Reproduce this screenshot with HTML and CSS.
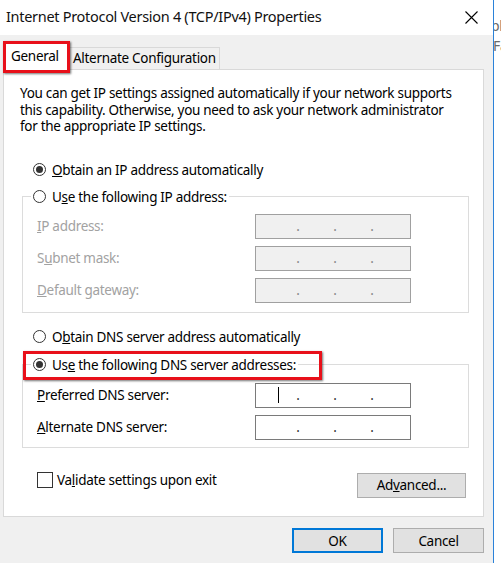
FILE: index.html
```html
<!DOCTYPE html>
<html>
<head>
<meta charset="utf-8">
<link rel="stylesheet" href="styles.css">
</head>
<body>
<div class="screen">
  <div class="window">
    <div class="titlebar">
      <span class="title">Internet Protocol Version 4 (TCP/IPv4) Properties</span>
      <svg class="close" width="13" height="13" viewBox="0 0 13 13"><path d="M0.5 0.5 L12.5 12.5 M12.5 0.5 L0.5 12.5" stroke="#000" stroke-width="1.1" fill="none"/></svg>
    </div>
    <div class="content">
      <div class="tabs">
        <div class="tab active">General<span class="mark mark-tab"></span></div>
        <div class="tab">Alternate Configuration</div>
      </div>
      <div class="panel">
        <p class="desc">You can get IP settings assigned automatically if your network supports<br>this capability. Otherwise, you need to ask your network administrator<br>for the appropriate IP settings.</p>

        <div class="radio-row r-ip-auto"><span class="radio checked"></span><span><u>O</u>btain an IP address automatically</span></div>
        <fieldset class="group g-ip">
          <legend class="radio-row"><span class="radio"></span><span>U<u>s</u>e the following IP address:</span></legend>
          <div class="field disabled"><span class="lbl"><u>I</u>P address:</span><div class="ipbox"><span>.</span><span>.</span><span>.</span></div></div>
          <div class="field disabled"><span class="lbl">S<u>u</u>bnet mask:</span><div class="ipbox"><span>.</span><span>.</span><span>.</span></div></div>
          <div class="field disabled"><span class="lbl"><u>D</u>efault gateway:</span><div class="ipbox"><span>.</span><span>.</span><span>.</span></div></div>
        </fieldset>

        <div class="radio-row r-dns-auto"><span class="radio"></span><span>O<u>b</u>tain DNS server address automatically</span></div>
        <fieldset class="group g-dns">
          <legend class="radio-row"><span class="radio checked"></span><span>Us<u>e</u> the following DNS server addresses:</span><span class="mark mark-dns"></span></legend>
          <div class="field"><span class="lbl"><u>P</u>referred DNS server:</span><div class="ipbox"><i class="caret"></i><span>.</span><span>.</span><span>.</span></div></div>
          <div class="field"><span class="lbl"><u>A</u>lternate DNS server:</span><div class="ipbox"><span>.</span><span>.</span><span>.</span></div></div>
        </fieldset>

        <div class="bottom-row">
          <div class="check-row"><span class="checkbox"></span><span>Va<u>l</u>idate settings upon exit</span></div>
          <div class="btn btn-adv">Ad<u>v</u>anced...</div>
        </div>
      </div>
      <div class="buttons">
        <div class="btn btn-main btn-ok">OK</div>
        <div class="btn btn-main">Cancel</div>
      </div>
    </div>
  </div>
  <div class="behind">
    <div class="b1">pl</div>
    <div class="b2">Fa</div>
  </div>
</div>
</body>
</html>
```
FILE: styles.css
```css
* { box-sizing: border-box; }
html, body { margin: 0; padding: 0; }
body {
  width: 501px;
  height: 563px;
  overflow: hidden;
  background: #fff;
  font-family: "Noto Sans", "DejaVu Sans", sans-serif;
  font-size: 13.5px;
  letter-spacing: -0.3px;
  color: #000;
}
.screen { display: flex; width: 501px; height: 563px; }
.window {
  width: 494px;
  height: 563px;
  background: #f0f0f0;
  border-right: 1px solid #2b82d9;
  display: flex;
  flex-direction: column;
}
.titlebar {
  height: 35px;
  background: #fff;
  display: flex;
  align-items: center;
  padding: 0 15px 3px 6px;
  flex: none;
}
.title { font-size: 14.5px; flex: 1; color: #111; }
.close { display: block; margin-top: 2px; }

.content { padding: 6px 9px 0 3px; }
.tabs { display: flex; align-items: flex-end; height: 28px; padding-left: 2px; }
.tab {
  height: 22px;
  padding: 0 3px 0 4px;
  line-height: 20px;
  background: #f0f0f0;
  border: 1px solid #d9d9d9;
  border-bottom: none;
  color: #000;
}
.tab.active {
  position: relative;
  height: 28px;
  width: 63px;
  padding: 0 5px;
  line-height: 26px;
  background: #fff;
  border-color: #d9d9d9;
  margin-bottom: -1px;
  z-index: 2;
}
.mark {
  position: absolute;
  border: 3px solid #e8101a;
  box-shadow: 1px 1px 2px rgba(0,0,0,0.55);
  pointer-events: none;
}
.mark-tab { left: -3px; top: -2px; right: -3px; bottom: -3px; }

.panel {
  height: 448px;
  background: #fff;
  border: 1px solid #d9d9d9;
  padding: 15px 14px 0 16px;
  position: relative;
}
.desc { margin: 0; line-height: 16.5px; }

.radio-row {
  display: flex;
  align-items: center;
  height: 20px;
  gap: 6px;
}
.radio {
  width: 13px;
  height: 13px;
  border: 1px solid #333;
  border-radius: 50%;
  background: #fff;
  display: flex;
  align-items: center;
  justify-content: center;
  flex: none;
}
.radio.checked::after {
  content: "";
  width: 7px;
  height: 7px;
  border-radius: 50%;
  background: #333;
}
.r-ip-auto { margin-top: 25px; padding-left: 13px; }
.r-dns-auto { margin-top: 14px; padding-left: 13px; }

.group {
  margin: 0 0 0 2px;
  border: 1px solid #dcdcdc;
  padding: 7px 14px 9px 14px;
  min-width: 0;
}
.g-ip { margin-top: 7px; }
.g-dns { margin-top: 8px; padding-top: 8px; padding-bottom: 7px; }
legend.radio-row {
  padding: 0 2px;
  margin-left: -6px;
  position: relative;
}
.mark-dns { left: -8px; right: -24px; top: -4px; bottom: -5px; }

.field {
  display: grid;
  grid-template-columns: 218px 156px;
  align-items: center;
  height: 25px;
}
.field + .field { margin-top: 7px; }
.field.disabled .lbl { color: #a2a2a2; }
.ipbox {
  height: 25px;
  border: 1px solid #7a7a7a;
  background: #fff;
  display: flex;
  align-items: center;
  padding-left: 40px;
  gap: 33px;
  position: relative;
  color: #333;
}
.ipbox span { width: 4px; text-align: center; }
.field.disabled .ipbox { background: #f0f0f0; border-color: #a0a0a0; color: #888; }
.caret {
  position: absolute;
  left: 22px;
  top: 3px;
  width: 1px;
  height: 16px;
  background: #000;
}

.bottom-row {
  display: flex;
  align-items: flex-start;
  justify-content: space-between;
  margin-top: 25px;
  padding-left: 17px;
  padding-right: 3px;
}
.check-row { display: flex; align-items: center; gap: 4px; margin-top: -3px; height: 20px; }
.checkbox { width: 16px; height: 16px; border: 1px solid #333; background: #fff; flex: none; }

.btn {
  height: 25px;
  background: #e1e1e1;
  border: 1px solid #adadad;
  display: flex;
  align-items: center;
  justify-content: center;
}
.btn-adv { width: 109px; }
.buttons {
  display: flex;
  justify-content: flex-end;
  gap: 10px;
  margin-top: 11px;
}
.btn-main { width: 91px; }
.btn-ok { border: 2px solid #0078d7; }

.behind {
  flex: 1;
  background: #fff;
  overflow: hidden;
  color: #6a6a6a;
  font-size: 14px;
  padding-top: 16px;
  line-height: 20px;
}
.b1, .b2 { margin-left: -3px; white-space: nowrap; }
.b2 { margin-left: -1px; }
```
